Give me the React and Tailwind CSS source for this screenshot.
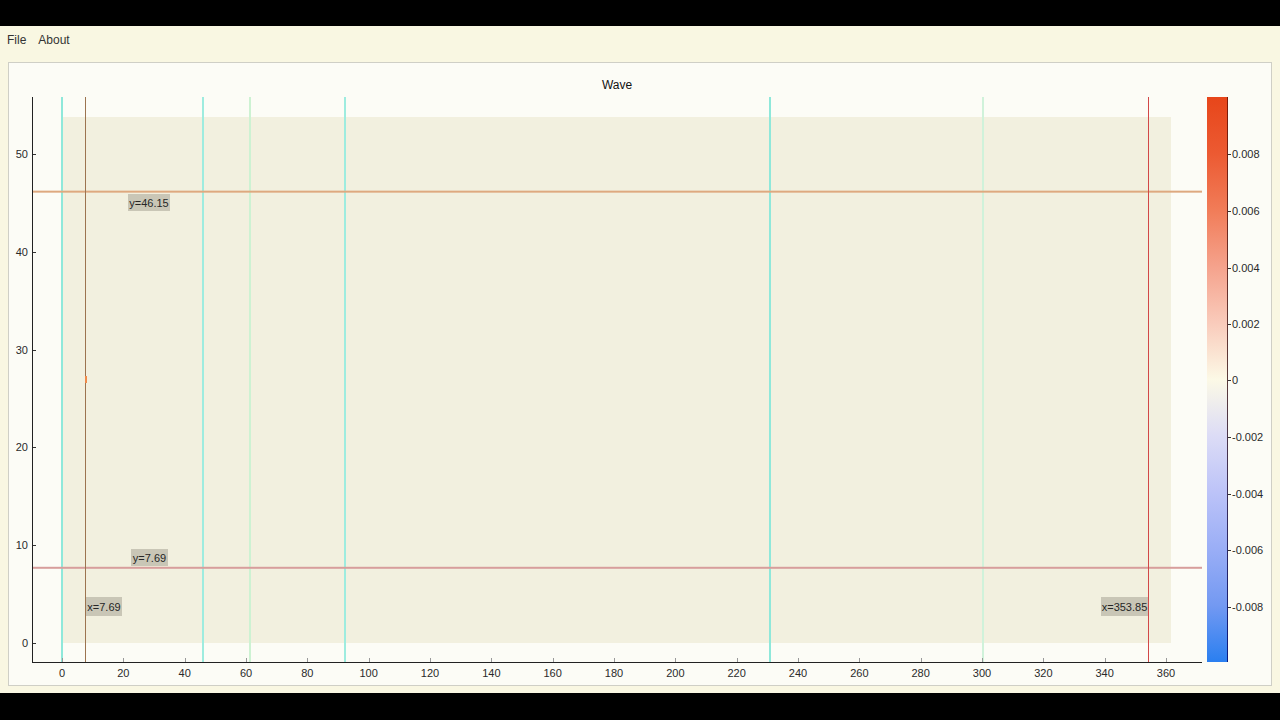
import React from 'react'

const X = v => 62 + v * 3.0667
const Y = v => 643 - v * 9.78

const xTicks = [0, 20, 40, 60, 80, 100, 120, 140, 160, 180, 200, 220, 240, 260, 280, 300, 320, 340, 360]
const yTicks = [0, 10, 20, 30, 40, 50]
const cbTicks = [
  { label: '0.008', y: 154 },
  { label: '0.006', y: 211 },
  { label: '0.004', y: 268 },
  { label: '0.002', y: 324 },
  { label: '0', y: 380 },
  { label: '-0.002', y: 437 },
  { label: '-0.004', y: 494 },
  { label: '-0.006', y: 550 },
  { label: '-0.008', y: 607 },
]

// vertical markers: [x pixel, colour, width]
const vLines = [
  [62, '#8fe8da', 2],
  [203, '#9eecdf', 2],
  [250, '#cdf2d2', 2],
  [345, '#9eecdf', 2],
  [770, '#8fe8da', 2],
  [983, '#d0f2da', 2],
]

function Tag({ x, y, w, h, text }) {
  return (
    <g>
      <rect x={x} y={y} width={w} height={h} fill="#c9c6b6" />
      <text x={x + w / 2} y={y + h / 2 + 4} textAnchor="middle" fontSize="11" fill="#262626">{text}</text>
    </g>
  )
}

function WaveChart() {
  return (
    <svg width="1262" height="622" viewBox="9 63 1262 622" className="block" fontFamily="'Liberation Sans', Arial, sans-serif">
      <defs>
        <linearGradient id="cmap" x1="0" y1="0" x2="0" y2="1">
          <stop offset="0" stopColor="#e7461a" />
          <stop offset="0.1" stopColor="#ec5a32" />
          <stop offset="0.2" stopColor="#f17c58" />
          <stop offset="0.3" stopColor="#f5a28c" />
          <stop offset="0.4" stopColor="#f9cbbb" />
          <stop offset="0.5" stopColor="#fcf9e6" />
          <stop offset="0.6" stopColor="#dcdcf6" />
          <stop offset="0.7" stopColor="#bcc3f8" />
          <stop offset="0.8" stopColor="#9aaef6" />
          <stop offset="0.9" stopColor="#7399f2" />
          <stop offset="1" stopColor="#2a7ff0" />
        </linearGradient>
        <linearGradient id="cedge" x1="0" y1="0" x2="0" y2="1">
          <stop offset="0" stopColor="#7a1a08" />
          <stop offset="0.5" stopColor="#5a3a3a" />
          <stop offset="1" stopColor="#0a1a80" />
        </linearGradient>
      </defs>

      <text x="617" y="89" textAnchor="middle" fontSize="12" fill="#111">Wave</text>

      {/* data extent */}
      <rect x={X(0)} y={117} width={1171 - X(0)} height={643 - 117} fill="#f2f0df" />

      {vLines.map(([x, c, w]) => (
        <rect key={x} x={x - w / 2} y={97} width={w} height={565} fill={c} />
      ))}

      {/* horizontal cursors */}
      <rect x={32} y={Y(46.15) - 1} width={1170} height={2} fill="#dea97f" />
      <rect x={32} y={Y(7.69) - 1} width={1170} height={2} fill="#d79e9c" />

      {/* vertical cursors */}
      <rect x={85} y={97} width={1} height={565} fill="#9c7450" />
      <rect x={85} y={376} width={2} height={7} fill="#f08a4a" />
      <rect x={1148} y={97} width={1} height={565} fill="#d24848" />

      <Tag x={128} y={194} w={42} h={17} text="y=46.15" />
      <Tag x={131} y={549} w={37} h={17} text="y=7.69" />
      <Tag x={86} y={597} w={36} h={19} text="x=7.69" />
      <Tag x={1101} y={597} w={47} h={19} text="x=353.85" />

      {/* axes */}
      <line x1={32.5} y1={97} x2={32.5} y2={662} stroke="#222" strokeWidth="1" />
      <line x1={32} y1={662.5} x2={1202} y2={662.5} stroke="#222" strokeWidth="1" />
      {yTicks.map(v => (
        <g key={v}>
          <line x1={33} y1={Math.round(Y(v)) + 0.5} x2={36} y2={Math.round(Y(v)) + 0.5} stroke="#333" />
          <text x={28} y={Y(v) + 4} textAnchor="end" fontSize="11" fill="#2a2a2a">{v}</text>
        </g>
      ))}
      {xTicks.map(v => (
        <g key={v}>
          <line x1={Math.round(X(v)) + 0.5} y1={658} x2={Math.round(X(v)) + 0.5} y2={662} stroke="#999" />
          <text x={X(v)} y={677} textAnchor="middle" fontSize="11" fill="#2a2a2a">{v}</text>
        </g>
      ))}

      {/* colour bar */}
      <rect x={1207} y={97} width={20} height={565} fill="url(#cmap)" />
      <rect x={1227} y={97} width={1} height={565} fill="url(#cedge)" />
      {cbTicks.map(t => (
        <g key={t.label}>
          <line x1={1228} y1={t.y + 0.5} x2={1231} y2={t.y + 0.5} stroke="#333" />
          <text x={1232} y={t.y + 4} fontSize="11" fill="#2a2a2a">{t.label}</text>
        </g>
      ))}
    </svg>
  )
}

export default function App() {
  return (
    <div className="h-screen flex flex-col bg-black overflow-hidden" style={{ fontFamily: "'Liberation Sans', Arial, sans-serif" }}>
      <div className="h-[26px] shrink-0 bg-black" />

      {/* Menu */}
      <div className="h-[28px] shrink-0 flex items-center bg-[#f9f7e2] text-[12px] text-[#333]">
        <span className="pl-[7px]">File</span>
        <span className="ml-[12px]">About</span>
      </div>

      <div className="flex-1 flex bg-[#f9f7e2] px-2 pt-2 pb-[7px] min-h-0">
        <div className="flex-1 border border-[#cfcfc6] bg-[#fcfcf6] overflow-hidden">
          <WaveChart />
        </div>
      </div>

      <div className="h-[27px] shrink-0 bg-black" />
    </div>
  )
}
